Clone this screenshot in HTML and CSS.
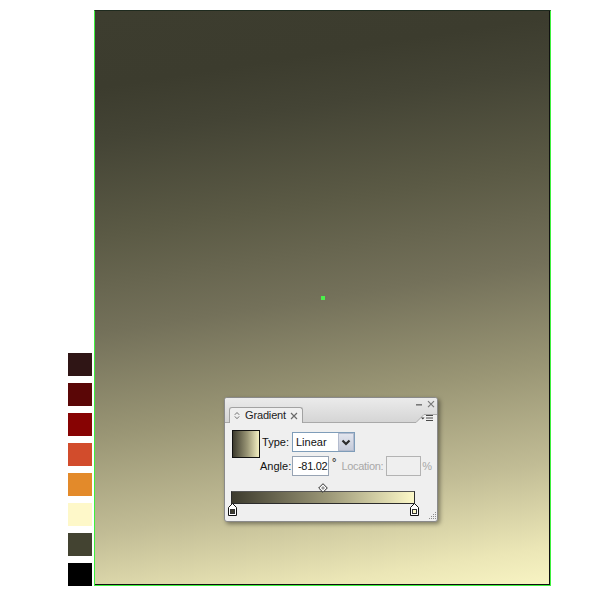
FILE: index.html
```html
<!DOCTYPE html>
<html>
<head>
<meta charset="utf-8">
<link rel="stylesheet" href="styles.css">
</head>
<body>
<div class="stage">
  <div class="swatches">
    <div class="sw sw1"></div>
    <div class="sw sw2"></div>
    <div class="sw sw3"></div>
    <div class="sw sw4"></div>
    <div class="sw sw5"></div>
    <div class="sw sw6"></div>
    <div class="sw sw7"></div>
    <div class="sw sw8"></div>
  </div>
  <div class="artboard">
    <div class="center-pt"></div>
    <div class="panel">
      <div class="panel-head">
        <div class="tab">
          <svg class="tab-arrows" width="6" height="9" viewBox="0 0 6 9"><polyline points="0.8,3.8 3,1.5 5.2,3.8"/><polyline points="0.8,5.4 3,7.7 5.2,5.4"/></svg>
          <span class="tab-title">Gradient</span>
          <svg class="tab-close" width="8" height="8" viewBox="0 0 8 8"><path d="M1 1L7 7M7 1L1 7"/></svg>
        </div>
        <svg class="notch" width="21" height="10" viewBox="0 0 21 10">
          <polygon class="notch-fill" points="0,10 0,9.5 8,1.5 21,1.5 21,10"/>
          <polyline class="notch-line" points="0,9.5 8,1.5 21,1.5"/>
          <polygon class="menu-tri" points="5,4.5 8.6,4.5 6.8,6.6"/>
          <path class="menu-lines" d="M10 2.5H17M10 5H17M10 7.5H17"/>
        </svg>
        <svg class="win-ctrls" width="22" height="9" viewBox="0 0 22 9">
          <path class="min" d="M2 4.8H8"/>
          <path class="cls" d="M14 1.2L20 7.2M20 1.2L14 7.2"/>
        </svg>
      </div>
      <div class="panel-body">
        <div class="props">
          <div class="preview"></div>
          <span class="lbl lbl-type">Type:</span>
          <div class="select">
            <span class="select-val">Linear</span>
            <span class="select-btn"><svg width="10" height="7" viewBox="0 0 10 7"><polyline points="1.5,1.5 5,5 8.5,1.5"/></svg></span>
          </div>
          <span class="lbl lbl-angle">Angle:</span>
          <div class="angle-row">
            <div class="field angle">-81.02</div>
            <span class="deg">°</span>
            <span class="dim loc">Location:</span>
            <div class="field disabled"></div>
            <span class="dim pct">%</span>
          </div>
        </div>
        <div class="ramp">
          <div class="mid">
            <svg width="10" height="10" viewBox="0 0 10 10"><polygon class="dia" points="5,0.7 9.3,5 5,9.3 0.7,5"/><polygon class="dia-in" points="5,3 7,5 5,7 3,5"/></svg>
          </div>
          <div class="bar"></div>
          <div class="stops">
            <svg width="9" height="13" viewBox="0 0 9 13"><path class="stop-out" d="M4.5 0.5L8.5 4.5V12.5H0.5V4.5Z"/><rect class="stop-in dark" x="2.5" y="6.5" width="4" height="4"/></svg>
            <svg width="9" height="13" viewBox="0 0 9 13"><path class="stop-out" d="M4.5 0.5L8.5 4.5V12.5H0.5V4.5Z"/><rect class="stop-in light" x="2.5" y="6.5" width="4" height="4"/></svg>
          </div>
        </div>
        <svg class="grip" width="9" height="9" viewBox="0 0 9 9">
          <rect x="8" y="2" width="1" height="1"/>
          <rect x="6" y="4" width="1" height="1"/><rect x="8" y="4" width="1" height="1"/>
          <rect x="4" y="6" width="1" height="1"/><rect x="6" y="6" width="1" height="1"/><rect x="8" y="6" width="1" height="1"/>
          <rect x="2" y="8" width="1" height="1"/><rect x="4" y="8" width="1" height="1"/><rect x="6" y="8" width="1" height="1"/><rect x="8" y="8" width="1" height="1"/>
        </svg>
      </div>
    </div>
  </div>
</div>
</body>
</html>
```
FILE: styles.css
```css
html, body {
  margin: 0;
  padding: 0;
  background: #ffffff;
}
body {
  font-family: "Liberation Sans", Arial, sans-serif;
  font-size: 11px;
  color: #1a1a1a;
}
.stage {
  display: flex;
  align-items: flex-end;
  gap: 2px;
  padding: 10px 0 0 68px;
}
.swatches {
  display: flex;
  flex-direction: column;
  gap: 7px;
}
.sw {
  width: 24px;
  height: 23px;
}
.sw1 { background: #2f1515; }
.sw2 { background: #5a0606; }
.sw3 { background: #870303; }
.sw4 { background: #d24c2c; }
.sw5 { background: #e38a2a; }
.sw6 { background: #fef8c9; }
.sw7 { background: #434331; }
.sw8 { background: #000000; }

.artboard {
  position: relative;
  width: 457px;
  height: 576px;
  box-sizing: border-box;
  border: 1px solid #3ef03e;
  border-top-color: #1e2a1e;
  background: linear-gradient(171deg,
    #3d3d2f 0%, #3c3c2e 12%, #444435 20%, #5b5a45 35%,
    #74715a 50%, #9a9675 66%, #c1bc95 81%, #ebe6b6 94%, #f8f4c3 100%);
  box-shadow: inset -1px -1px 0 #101010;
}
.center-pt {
  position: absolute;
  left: 226px;
  top: 285px;
  width: 4px;
  height: 4px;
  background: #4bf04b;
}

.panel {
  position: absolute;
  left: 129px;
  top: 386px;
  width: 214px;
  height: 125px;
  box-sizing: border-box;
  border: 1px solid #8a8a8a;
  border-radius: 3px;
  background: #efefef;
  box-shadow: 2px 2px 4px rgba(0, 0, 0, 0.4);
  display: flex;
  flex-direction: column;
}
.panel-head {
  position: relative;
  height: 24px;
  flex: none;
  display: flex;
  align-items: flex-end;
  padding-left: 4px;
  background: linear-gradient(#ebebeb, #d5d5d5);
  border-bottom: 1px solid #a9a9a9;
  border-radius: 2px 2px 0 0;
}
.tab {
  width: 74px;
  height: 16px;
  box-sizing: border-box;
  margin-bottom: -1px;
  border: 1px solid #a2a2a2;
  border-bottom: none;
  border-radius: 3px 3px 0 0;
  background: #efefef;
  display: flex;
  align-items: center;
  padding-left: 4px;
}
.tab-arrows {
  flex: none;
  fill: none;
  stroke: #707070;
  stroke-width: 1;
}
.tab-title {
  margin-left: 5px;
  color: #222;
  letter-spacing: -0.15px;
  line-height: 15px;
}
.tab-close {
  margin-left: 4px;
  fill: none;
  stroke: #6a6a6a;
  stroke-width: 1.2;
}
.notch {
  margin-left: auto;
  margin-bottom: -1px;
  display: block;
}
.notch-fill { fill: #efefef; }
.notch-line { fill: none; stroke: #a9a9a9; stroke-width: 1; }
.menu-tri { fill: #3a3a3a; }
.menu-lines { stroke: #4a4a4a; stroke-width: 1; fill: none; }
.win-ctrls {
  position: absolute;
  top: 2px;
  right: 1px;
}
.win-ctrls .min { stroke: #7a7a7a; stroke-width: 1.6; fill: none; }
.win-ctrls .cls { stroke: #7a7a7a; stroke-width: 1.2; fill: none; }

.panel-body {
  position: relative;
  flex: 1;
}
.props {
  display: grid;
  grid-template-columns: 28px 32px auto;
  grid-template-rows: 20px 20px;
  row-gap: 4px;
  align-items: center;
  padding: 9px 0 0 7px;
}
.preview {
  grid-column: 1;
  grid-row: 1 / span 2;
  align-self: start;
  margin-top: -2px;
  width: 28px;
  height: 28px;
  box-sizing: border-box;
  border: 1px solid #111;
  background: linear-gradient(to right, #3d3b2e, #9a9676 55%, #f4f0c2);
}
.lbl {
  grid-column: 2;
  text-align: right;
  padding-right: 3px;
  color: #111;
  white-space: nowrap;
}
.lbl-type { grid-row: 1; }
.lbl-angle { grid-row: 2; }
.select {
  grid-column: 3;
  grid-row: 1;
  justify-self: start;
  width: 63px;
  height: 20px;
  box-sizing: border-box;
  border: 1px solid #7f9db9;
  background: #fff;
  display: flex;
}
.select-val {
  flex: 1;
  padding-left: 3px;
  line-height: 18px;
  color: #111;
}
.select-btn {
  width: 16px;
  box-sizing: border-box;
  border: 1px solid #b4bccf;
  background: linear-gradient(#e2e5ee, #c6cbd9);
  display: flex;
  align-items: center;
  justify-content: center;
}
.select-btn svg polyline {
  fill: none;
  stroke: #2b2b2b;
  stroke-width: 2.2;
}
.angle-row {
  grid-column: 3;
  grid-row: 2;
  display: flex;
  align-items: center;
  height: 20px;
}
.field {
  height: 20px;
  box-sizing: border-box;
  border: 1px solid #97a3b3;
  background: #fff;
}
.angle {
  width: 37px;
  padding-left: 5px;
  line-height: 18px;
  color: #111;
  letter-spacing: -0.3px;
}
.deg {
  margin-left: 3px;
  align-self: flex-start;
  line-height: 13px;
  font-weight: bold;
  color: #444;
}
.dim { color: #a8a8a8; }
.loc {
  margin-left: 5px;
  letter-spacing: -0.3px;
}
.disabled {
  width: 35px;
  margin-left: 3px;
  border-color: #b3b3b3;
  background: #efefef;
}
.pct { margin-left: 1px; }

.ramp {
  margin-top: 7px;
}
.mid {
  margin-left: 6px;
  width: 184px;
  height: 10px;
  margin-bottom: -2px;
  display: flex;
  justify-content: center;
}
.mid svg { display: block; }
.dia { fill: #ffffff; stroke: #2a2a2a; stroke-width: 1; }
.dia-in { fill: #9a9a9a; }
.bar {
  margin-left: 6px;
  width: 184px;
  height: 13px;
  box-sizing: border-box;
  border: 1px solid #2c2c2c;
  border-top-color: #555;
  background: linear-gradient(to right, #3d3b2e, #9a9676 52%, #fcf8c8);
}
.stops {
  margin-left: 3px;
  margin-top: -1px;
  width: 191px;
  display: flex;
  justify-content: space-between;
}
.stops svg { display: block; }
.stop-out { fill: #ffffff; stroke: #111; stroke-width: 1; }
.stop-in { stroke: #333; stroke-width: 1; }
.stop-in.dark { fill: #3f3d30; }
.stop-in.light { fill: #fcf8c8; }
.grip {
  position: absolute;
  right: 1px;
  bottom: 2px;
  fill: #8c8c8c;
}
```
